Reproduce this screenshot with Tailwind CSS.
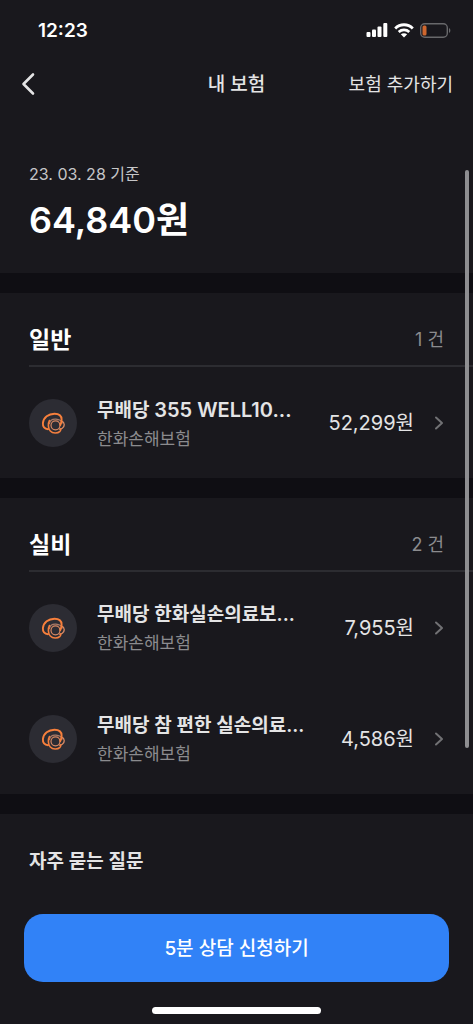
<!DOCTYPE html>
<html lang="ko">
<head>
<meta charset="utf-8">
<meta name="viewport" content="width=device-width, initial-scale=1">
<title>내 보험</title>
<script src="https://cdn.jsdelivr.net/npm/@tailwindcss/browser@4"></script>
</head>
<body class="bg-[#19181d] font-['Inter','Noto_Sans_CJK_KR',sans-serif] text-[#e4e4e5]">
<svg class="hidden" aria-hidden="true">
  <symbol id="swirl" viewBox="7 8 24 24">
    <g fill="none" stroke-linecap="round">
      <path stroke="#a87a68" stroke-width="1.200" d="M15.500 20.500C16 17.500 18.500 15.900 22 16.200C25 16.500 27.500 18 28.300 20"/>
      <path stroke="#d98a64" stroke-width="1.300" d="M27.800 18.200C30.800 19.500 31 23.500 28.300 25.200C27.500 25.700 26.500 26 25.500 26.200"/>
      <circle cx="21.500" cy="22.300" r="4.500" stroke="#d98a64" stroke-width="1.200"/>
      <path stroke="#f37f3f" stroke-width="1.600" d="M15.500 17.500C13.800 20.500 14 25.500 16.300 28C18.700 30.600 23.500 30.600 26 28.300C26.700 27.600 26.900 26.800 26.700 26"/>
      <path stroke="#f8803c" stroke-width="1.900" d="M14 26.200C10.500 26.200 8.600 23.500 8.900 20.200C9.500 14.500 14.500 10.800 20.500 10.700C25 10.700 27.600 12.500 27.600 16.500C27.600 18.500 27.200 20.500 26.300 22"/>
    </g>
  </symbol>
  <symbol id="next" viewBox="0 0 10 16">
    <path d="M2 2.500L8 8L2 13.500" fill="none" stroke="#717174" stroke-width="2" stroke-linecap="round" stroke-linejoin="round"/>
  </symbol>
</svg>

<div class="relative flex min-h-screen flex-col">
  <div class="flex h-15 items-center justify-between pr-[22px] pl-[38px]">
    <time class="pt-[2px] text-[19px] leading-6 font-semibold text-white">12:23</time>
    <div class="flex items-center gap-[6px]">
      <svg class="h-[14px] w-[22px]" viewBox="0 0 22 14" fill="#fff" aria-hidden="true">
        <rect x="0.500" y="9" width="4" height="5" rx="1"/>
        <rect x="6" y="6.500" width="4" height="7.500" rx="1"/>
        <rect x="11.500" y="3.500" width="4" height="10.500" rx="1"/>
        <rect x="17.300" y="0" width="4" height="14" rx="1"/>
      </svg>
      <svg class="h-[15px] w-5" viewBox="0 0 20 15" fill="none" stroke="#fff" aria-hidden="true">
        <path stroke-width="2.800" d="M1.200 5.400C6.100 0.500 13.900 0.500 18.800 5.400"/>
        <path stroke-width="2.700" d="M4.700 9C7.700 6.200 12.300 6.200 15.300 9"/>
        <path fill="#fff" stroke="none" d="M6.800 11.300C8.600 9.800 11.400 9.800 13.200 11.300L10 14.500Z"/>
      </svg>
      <svg class="h-[15px] w-[31px]" viewBox="0 0 31 15" aria-hidden="true">
        <rect x="0.700" y="0.700" width="26.600" height="13.600" rx="4" fill="none" stroke="#68686b" stroke-width="1.400"/>
        <rect x="2.500" y="2.500" width="4" height="10" rx="1.500" fill="#cf672e"/>
        <path d="M29 5C30.800 5.800 30.800 9.200 29 10Z" fill="#68686b"/>
      </svg>
    </div>
  </div>

  <header class="grid h-12 grid-cols-[1fr_auto_1fr] items-center px-5">
    <button type="button" aria-label="뒤로" class="justify-self-start">
      <svg class="h-6 w-4" viewBox="0 0 16 24" fill="none" stroke="#e4e4e5" stroke-width="2.600" stroke-linecap="round" stroke-linejoin="round" aria-hidden="true"><path d="M13 2.500L3.500 12L13 21.500"/></svg>
    </button>
    <h1 class="pt-[2px] text-[19px] leading-6 font-medium">내 보험</h1>
    <button type="button" class="justify-self-end pt-[2px] text-lg leading-6">보험 추가하기</button>
  </header>

  <main class="flex-1">
    <section class="px-[29px] pt-[54px] pb-[29px]">
      <p class="text-base leading-6 text-[#c6c6c8]">23. 03. 28 기준</p>
      <p class="mt-[10px] text-4xl leading-12 font-semibold text-white">64,840원</p>
    </section>

    <section class="border-t-20 border-[#0f0e13]">
      <div class="ml-[29px] flex h-[74px] items-center justify-between border-b-2 border-[#2c2c31] pt-[22px] pr-[29px]">
        <h2 class="text-[23px] leading-8 font-semibold text-white">일반</h2>
        <span class="text-lg leading-6 text-[#8b8b8e]">1 건</span>
      </div>
      <a href="#" class="flex h-[111px] items-center px-[29px]">
        <span class="flex size-12 shrink-0 items-center justify-center rounded-full bg-[#2c2c33]"><svg class="size-6" aria-hidden="true"><use href="#swirl"/></svg></span>
        <span class="ml-5 min-w-0 flex-1 pt-[3px]">
          <span class="block truncate text-[19px] leading-7 font-semibold">무배당 <span class="text-xl leading-7">355 WELL10...</span></span>
          <span class="block text-[17px] leading-7 text-[#8b8b8e]">한화손해보험</span>
        </span>
        <span class="text-xl leading-7">52,299원</span>
        <svg class="ml-5 h-4 w-[10px] shrink-0" aria-hidden="true"><use href="#next"/></svg>
      </a>
    </section>

    <section class="border-t-20 border-[#0f0e13]">
      <div class="ml-[29px] flex h-[74px] items-center justify-between border-b-2 border-[#2c2c31] pt-[22px] pr-[29px]">
        <h2 class="text-[23px] leading-8 font-semibold text-white">실비</h2>
        <span class="text-lg leading-6 text-[#8b8b8e]">2 건</span>
      </div>
      <a href="#" class="flex h-[111px] items-center px-[29px]">
        <span class="flex size-12 shrink-0 items-center justify-center rounded-full bg-[#2c2c33]"><svg class="size-6" aria-hidden="true"><use href="#swirl"/></svg></span>
        <span class="ml-5 min-w-0 flex-1 pt-[3px]">
          <span class="block truncate text-[19px] leading-7 font-semibold">무배당 한화실손의료보...</span>
          <span class="block text-[17px] leading-7 text-[#8b8b8e]">한화손해보험</span>
        </span>
        <span class="text-xl leading-7">7,955원</span>
        <svg class="ml-5 h-4 w-[10px] shrink-0" aria-hidden="true"><use href="#next"/></svg>
      </a>
      <a href="#" class="flex h-[111px] items-center px-[29px]">
        <span class="flex size-12 shrink-0 items-center justify-center rounded-full bg-[#2c2c33]"><svg class="size-6" aria-hidden="true"><use href="#swirl"/></svg></span>
        <span class="ml-5 min-w-0 flex-1 pt-[3px]">
          <span class="block truncate text-[19px] leading-7 font-semibold">무배당 참 편한 실손의료...</span>
          <span class="block text-[17px] leading-7 text-[#8b8b8e]">한화손해보험</span>
        </span>
        <span class="text-xl leading-7">4,586원</span>
        <svg class="ml-5 h-4 w-[10px] shrink-0" aria-hidden="true"><use href="#next"/></svg>
      </a>
    </section>

    <section class="border-t-20 border-[#0f0e13] px-[29px] pt-[34px]">
      <h2 class="text-[19px] leading-7 font-semibold">자주 묻는 질문</h2>
    </section>
  </main>

  <footer class="px-6 pb-[10px]">
    <button type="button" class="h-17 w-full rounded-[19px] bg-[#3182f7] pt-[2px] text-[19px] leading-6 font-medium text-white">5분 상담 신청하기</button>
    <div class="mx-auto mt-[25px] h-[7px] w-[169px] rounded-full bg-white"></div>
  </footer>

  <div class="absolute top-[170px] right-1 h-[578px] w-1 rounded-full bg-[#8e8e91]" aria-hidden="true"></div>
</div>
</body>
</html>
